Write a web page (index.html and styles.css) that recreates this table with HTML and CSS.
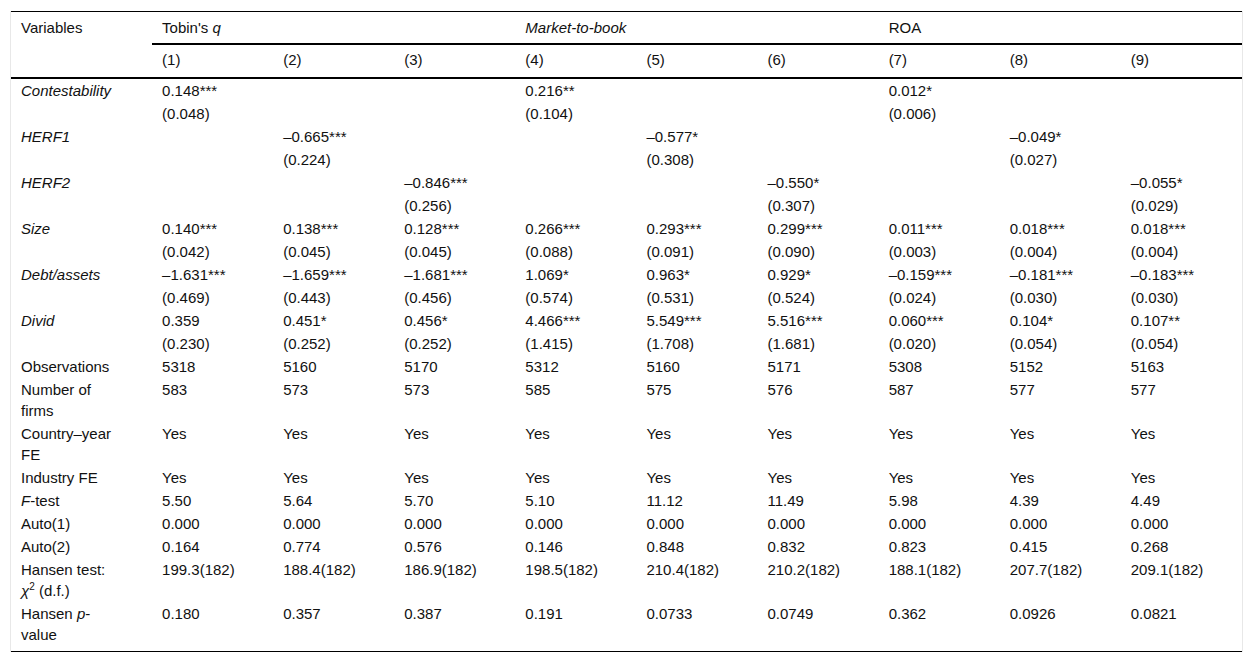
FILE: index.html
```html
<!DOCTYPE html>
<html>
<head>
<meta charset="utf-8">
<link rel="stylesheet" href="styles.css">
</head>
<body>
<div class="wrap">
<table class="res">
<colgroup>
<col class="c-var"><col class="c-n"><col class="c-n"><col class="c-n"><col class="c-n"><col class="c-n"><col class="c-n"><col class="c-n"><col class="c-n"><col class="c-n">
</colgroup>
<thead>
<tr class="h1">
<th rowspan="2" class="var">Variables</th>
<th colspan="3" class="grp">Tobin's <i>q</i></th>
<th colspan="3" class="grp"><i>Market-to-book</i></th>
<th colspan="3" class="grp">ROA</th>
</tr>
<tr class="h2">
<th>(1)</th><th>(2)</th><th>(3)</th><th>(4)</th><th>(5)</th><th>(6)</th><th>(7)</th><th>(8)</th><th>(9)</th>
</tr>
</thead>
<tbody>
<tr><td><i>Contestability</i></td><td>0.148<sup>***</sup></td><td></td><td></td><td>0.216<sup>**</sup></td><td></td><td></td><td>0.012<sup>*</sup></td><td></td><td></td></tr>
<tr><td></td><td>(0.048)</td><td></td><td></td><td>(0.104)</td><td></td><td></td><td>(0.006)</td><td></td><td></td></tr>
<tr><td><i>HERF1</i></td><td></td><td>–0.665<sup>***</sup></td><td></td><td></td><td>–0.577<sup>*</sup></td><td></td><td></td><td>–0.049<sup>*</sup></td><td></td></tr>
<tr><td></td><td></td><td>(0.224)</td><td></td><td></td><td>(0.308)</td><td></td><td></td><td>(0.027)</td><td></td></tr>
<tr><td><i>HERF2</i></td><td></td><td></td><td>–0.846<sup>***</sup></td><td></td><td></td><td>–0.550<sup>*</sup></td><td></td><td></td><td>–0.055<sup>*</sup></td></tr>
<tr><td></td><td></td><td></td><td>(0.256)</td><td></td><td></td><td>(0.307)</td><td></td><td></td><td>(0.029)</td></tr>
<tr><td><i>Size</i></td><td>0.140<sup>***</sup></td><td>0.138<sup>***</sup></td><td>0.128<sup>***</sup></td><td>0.266<sup>***</sup></td><td>0.293<sup>***</sup></td><td>0.299<sup>***</sup></td><td>0.011<sup>***</sup></td><td>0.018<sup>***</sup></td><td>0.018<sup>***</sup></td></tr>
<tr><td></td><td>(0.042)</td><td>(0.045)</td><td>(0.045)</td><td>(0.088)</td><td>(0.091)</td><td>(0.090)</td><td>(0.003)</td><td>(0.004)</td><td>(0.004)</td></tr>
<tr><td><i>Debt/assets</i></td><td>–1.631<sup>***</sup></td><td>–1.659<sup>***</sup></td><td>–1.681<sup>***</sup></td><td>1.069<sup>*</sup></td><td>0.963<sup>*</sup></td><td>0.929<sup>*</sup></td><td>–0.159<sup>***</sup></td><td>–0.181<sup>***</sup></td><td>–0.183<sup>***</sup></td></tr>
<tr><td></td><td>(0.469)</td><td>(0.443)</td><td>(0.456)</td><td>(0.574)</td><td>(0.531)</td><td>(0.524)</td><td>(0.024)</td><td>(0.030)</td><td>(0.030)</td></tr>
<tr><td><i>Divid</i></td><td>0.359</td><td>0.451<sup>*</sup></td><td>0.456<sup>*</sup></td><td>4.466<sup>***</sup></td><td>5.549<sup>***</sup></td><td>5.516<sup>***</sup></td><td>0.060<sup>***</sup></td><td>0.104<sup>*</sup></td><td>0.107<sup>**</sup></td></tr>
<tr><td></td><td>(0.230)</td><td>(0.252)</td><td>(0.252)</td><td>(1.415)</td><td>(1.708)</td><td>(1.681)</td><td>(0.020)</td><td>(0.054)</td><td>(0.054)</td></tr>
<tr><td>Observations</td><td>5318</td><td>5160</td><td>5170</td><td>5312</td><td>5160</td><td>5171</td><td>5308</td><td>5152</td><td>5163</td></tr>
<tr><td>Number of firms</td><td>583</td><td>573</td><td>573</td><td>585</td><td>575</td><td>576</td><td>587</td><td>577</td><td>577</td></tr>
<tr><td>Country–year FE</td><td>Yes</td><td>Yes</td><td>Yes</td><td>Yes</td><td>Yes</td><td>Yes</td><td>Yes</td><td>Yes</td><td>Yes</td></tr>
<tr><td>Industry FE</td><td>Yes</td><td>Yes</td><td>Yes</td><td>Yes</td><td>Yes</td><td>Yes</td><td>Yes</td><td>Yes</td><td>Yes</td></tr>
<tr><td><i>F</i>-test</td><td>5.50</td><td>5.64</td><td>5.70</td><td>5.10</td><td>11.12</td><td>11.49</td><td>5.98</td><td>4.39</td><td>4.49</td></tr>
<tr><td>Auto(1)</td><td>0.000</td><td>0.000</td><td>0.000</td><td>0.000</td><td>0.000</td><td>0.000</td><td>0.000</td><td>0.000</td><td>0.000</td></tr>
<tr><td>Auto(2)</td><td>0.164</td><td>0.774</td><td>0.576</td><td>0.146</td><td>0.848</td><td>0.832</td><td>0.823</td><td>0.415</td><td>0.268</td></tr>
<tr><td>Hansen test: <i>χ</i><sup class="exp">2</sup> (d.f.)</td><td>199.3(182)</td><td>188.4(182)</td><td>186.9(182)</td><td>198.5(182)</td><td>210.4(182)</td><td>210.2(182)</td><td>188.1(182)</td><td>207.7(182)</td><td>209.1(182)</td></tr>
<tr class="last"><td>Hansen <i>p</i>-value</td><td>0.180</td><td>0.357</td><td>0.387</td><td>0.191</td><td>0.0733</td><td>0.0749</td><td>0.362</td><td>0.0926</td><td>0.0821</td></tr>
</tbody>
</table>
</div>
</body>
</html>
```

FILE: styles.css
```css
html, body {
  margin: 0;
  padding: 0;
  background: #ffffff;
}
body {
  font-family: "Liberation Sans", Arial, sans-serif;
  color: #111111;
}
.wrap {
  margin: 11px 0 0 10px;
  width: 1231px;
  border-left: 1px solid #e8e8e8;
  border-right: 1px solid #e8e8e8;
}
.res {
  width: 1231px;
  table-layout: fixed;
  border-collapse: collapse;
  font-size: 15px;
  line-height: 21px;
}
.c-var { width: 141px; }
.c-n { width: 121px; }
.res th {
  font-weight: normal;
  text-align: left;
  vertical-align: top;
  line-height: 20px;
  padding: 6px 10px 5px;
}
.res thead tr.h1 th {
  border-top: 1px solid #000;
}
.res th.grp {
  border-bottom: 2px solid #000;
}
.res thead tr.h2 th,
.res th.var {
  border-bottom: 2px solid #000;
}
.res thead tr.h2 th {
  padding-top: 5px;
  padding-bottom: 7px;
}
.res td {
  text-align: left;
  vertical-align: top;
  padding: 1px 10px 1px;
}
.res td:first-child {
  padding-right: 32px;
}
.res tr.last td {
  padding-bottom: 6px;
  border-bottom: 1px solid #000;
}
.res sup {
  font-size: 15px;
  line-height: 0;
  vertical-align: 0;
}
.res sup.exp {
  font-size: 10px;
  vertical-align: 6px;
}
```
